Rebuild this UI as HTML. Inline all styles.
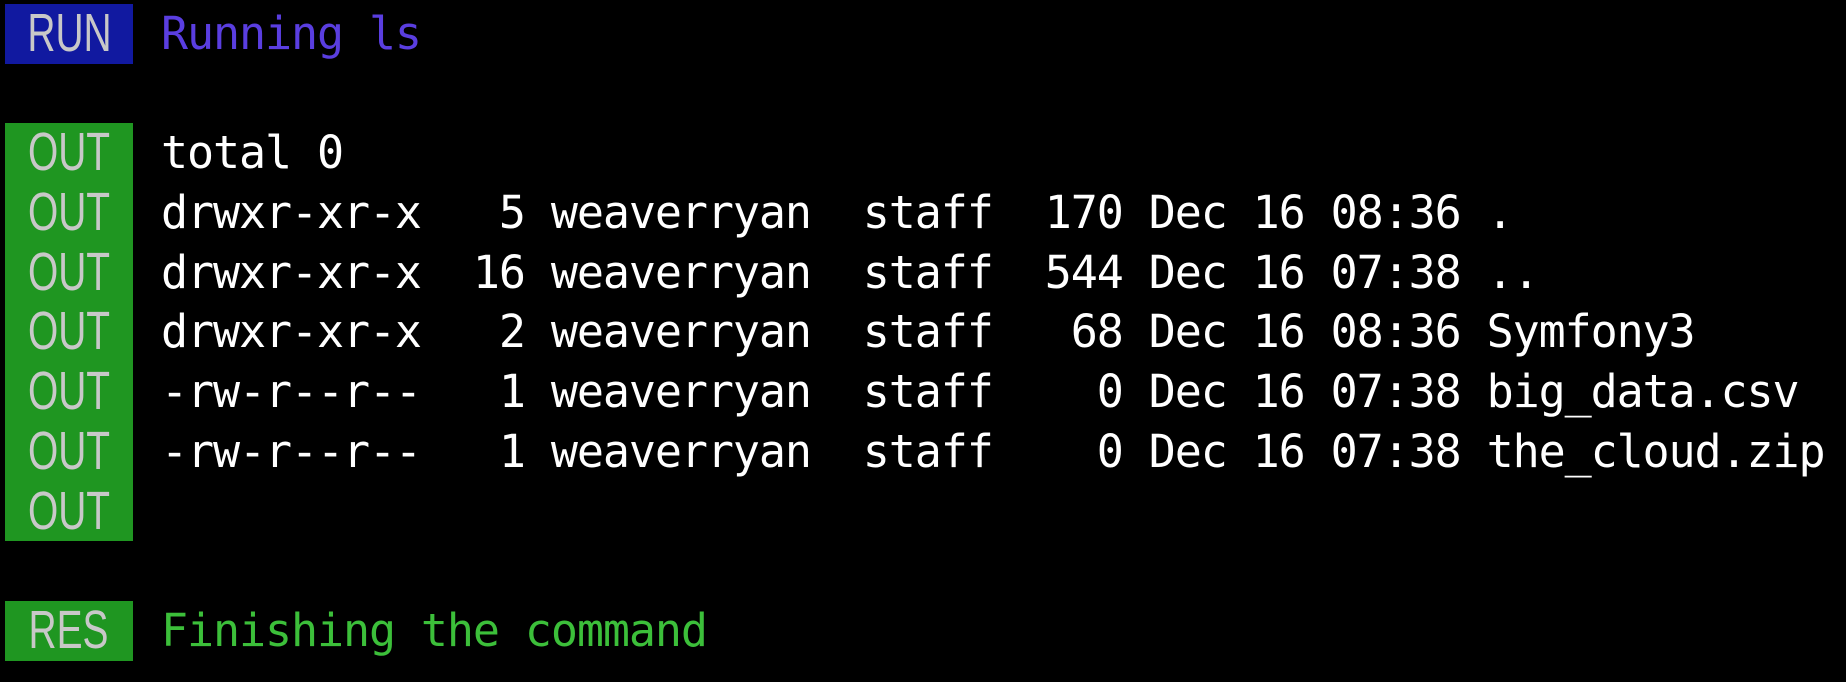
<!DOCTYPE html>
<html><head><meta charset="utf-8"><style>
html,body{margin:0;padding:0;background:#000;width:1846px;height:682px;overflow:hidden}
body{font-family:"DejaVu Sans Mono","Liberation Mono",monospace;font-size:45px;letter-spacing:-1.1px}
.wrap{position:absolute;top:4px;left:0}
.l{height:59.7px;line-height:59.7px;position:relative;white-space:pre;}
.lab{position:absolute;left:5px;width:128px;height:100%;text-align:center;color:#c8c8c8;font-family:"Liberation Sans",sans-serif;font-size:54px;letter-spacing:0}
.lab span{display:inline-block;transform:scaleX(0.72)}
.t{position:absolute;left:161px;color:#fff}
.run{background:#1119a0}
.out{background:#1f9621}
</style></head><body><div class="wrap">
<div class="l"><div class="lab run"><span>RUN</span></div><div class="t" style="color:#5a3ee0">Running ls</div></div>
<div class="l"></div>
<div class="l"><div class="lab out"><span>OUT</span></div><div class="t">total 0</div></div>
<div class="l"><div class="lab out"><span>OUT</span></div><div class="t">drwxr-xr-x   5 weaverryan  staff  170 Dec 16 08:36 .</div></div>
<div class="l"><div class="lab out"><span>OUT</span></div><div class="t">drwxr-xr-x  16 weaverryan  staff  544 Dec 16 07:38 ..</div></div>
<div class="l"><div class="lab out"><span>OUT</span></div><div class="t">drwxr-xr-x   2 weaverryan  staff   68 Dec 16 08:36 Symfony3</div></div>
<div class="l"><div class="lab out"><span>OUT</span></div><div class="t">-rw-r--r--   1 weaverryan  staff    0 Dec 16 07:38 big_data.csv</div></div>
<div class="l"><div class="lab out"><span>OUT</span></div><div class="t">-rw-r--r--   1 weaverryan  staff    0 Dec 16 07:38 the_cloud.zip</div></div>
<div class="l"><div class="lab out"><span>OUT</span></div></div>
<div class="l"></div>
<div class="l"><div class="lab out"><span>RES</span></div><div class="t" style="color:#3cbf3a">Finishing the command</div></div>
</div></body></html>
